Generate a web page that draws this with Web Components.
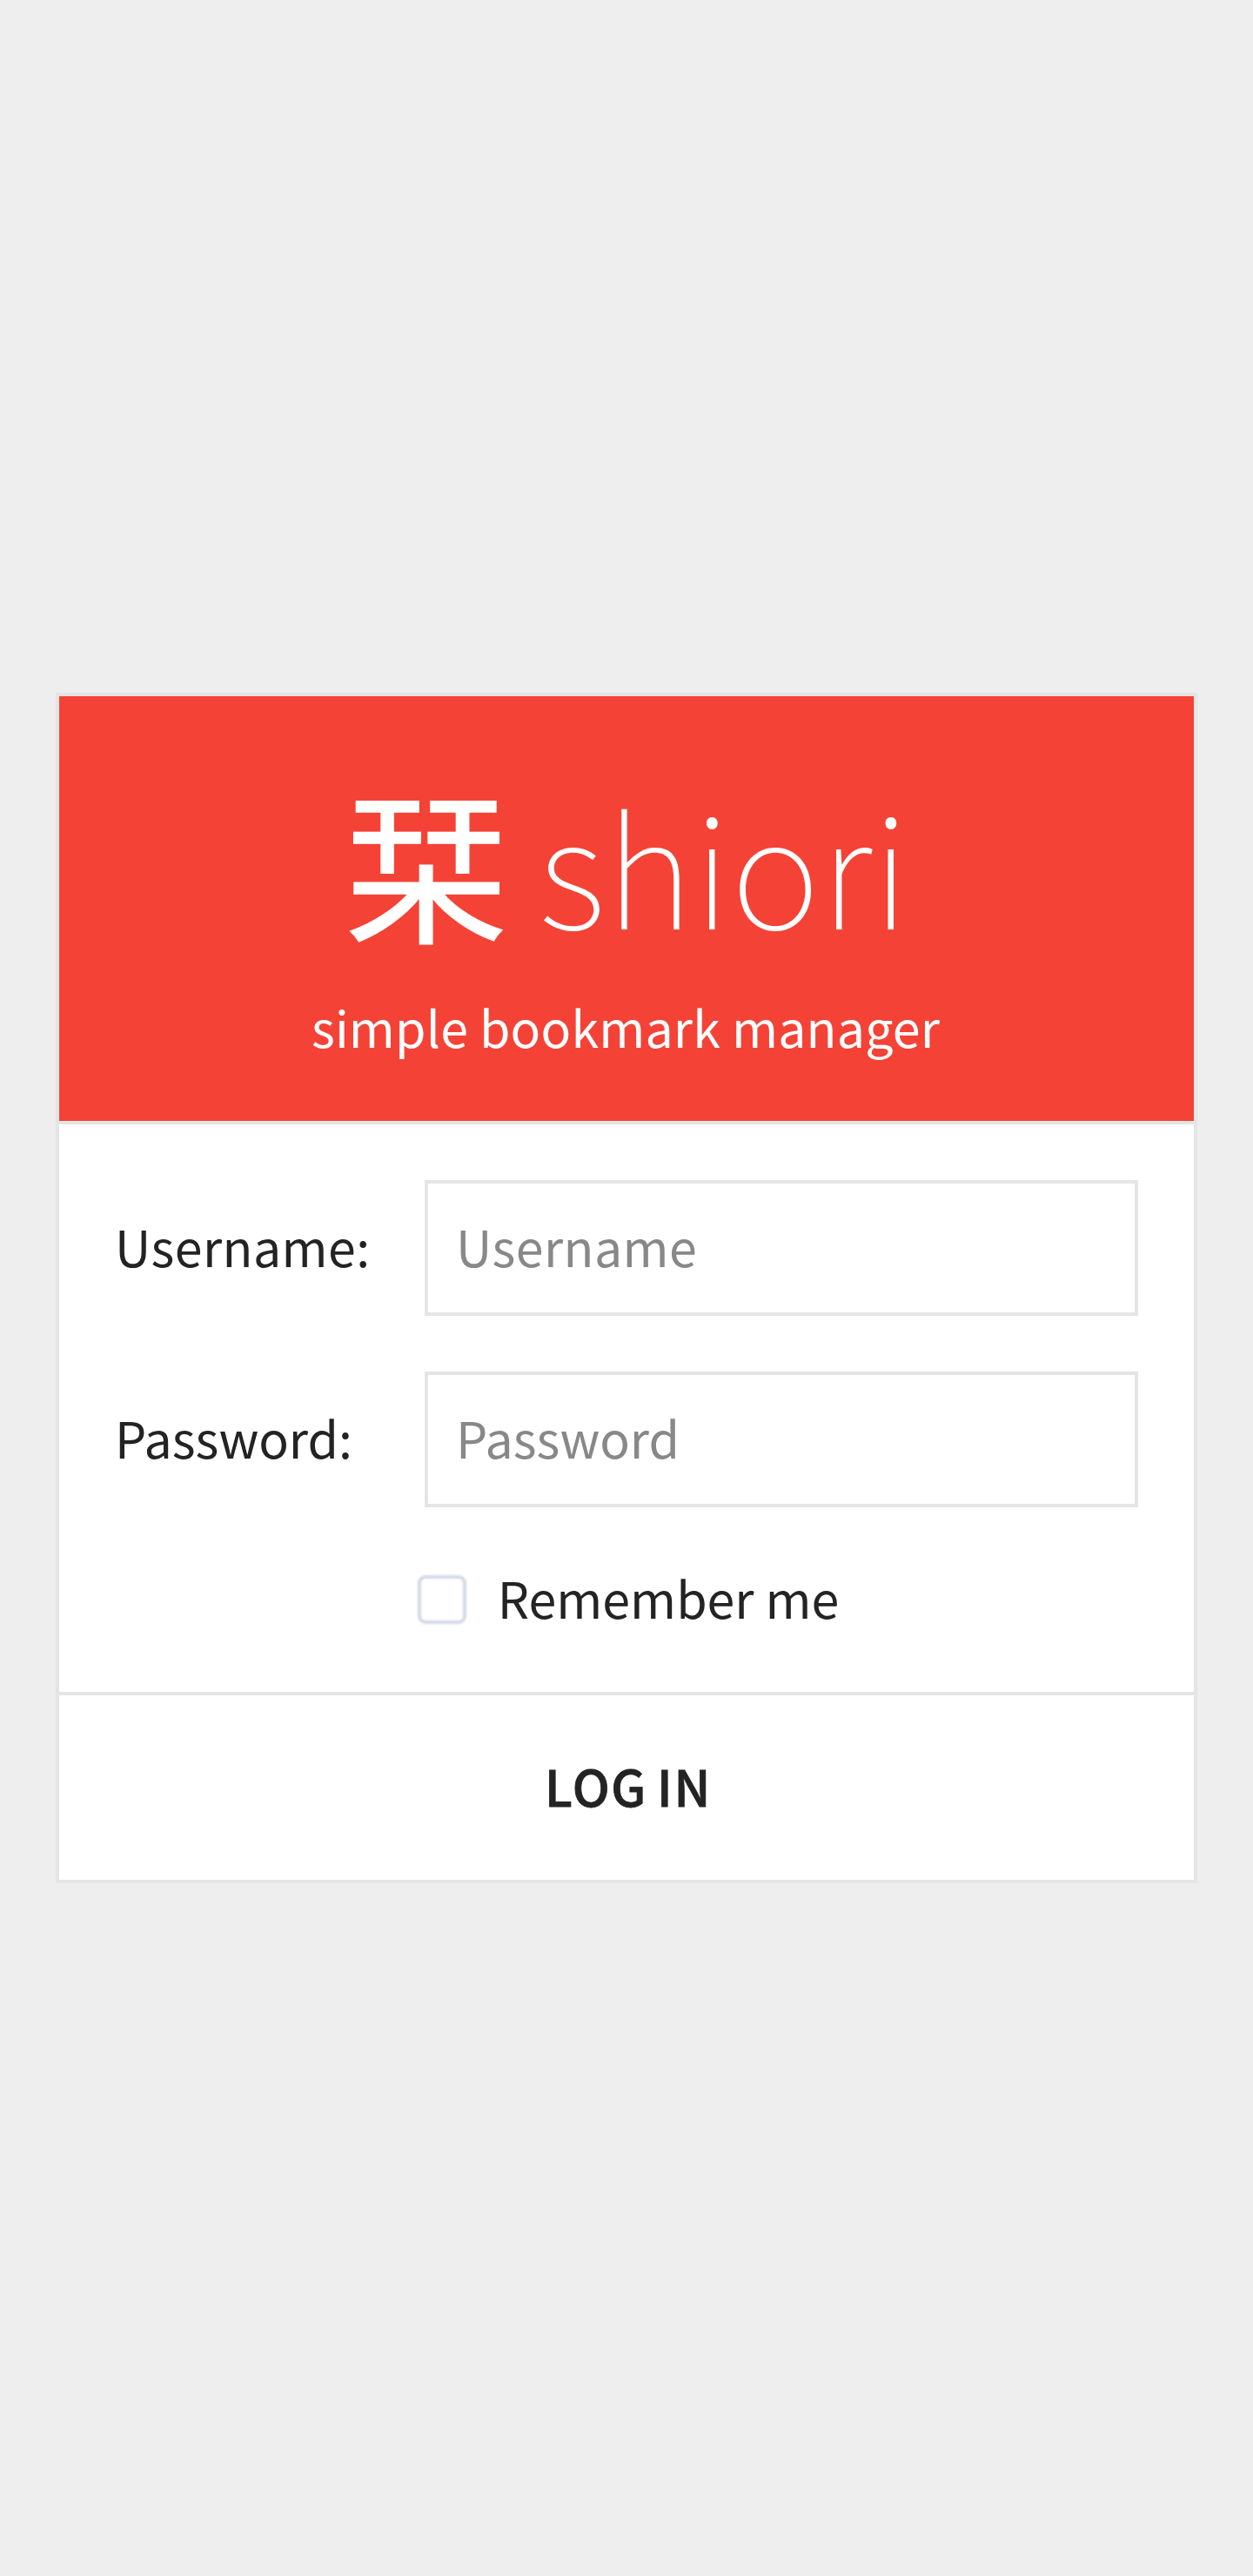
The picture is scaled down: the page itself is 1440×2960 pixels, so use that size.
<!DOCTYPE html>
<html lang="en">
<head>
<meta charset="utf-8">
<title>Shiori - Login</title>
<style>
html, body { margin: 0; height: 100%; }
body { background: #eee; color: #232323; font-family: "Noto Sans CJK JP", sans-serif; font-size: 57.3px; }
</style>
</head>
<body>
<login-page></login-page>
<script>
const define = (name, html) => customElements.define(name, class extends HTMLElement {
  constructor() {
    super();
    this.attachShadow({ mode: 'open' }).innerHTML = html.replace(/\{(\w+)\}/g, (m, k) => this.getAttribute(k) || '');
  }
});

define('brand-header', `
<style>
:host { display: flex; flex-direction: column; align-items: center; box-sizing: border-box; height: 492px; padding-top: 72px; background: #f44336; color: #fff; border-bottom: 4px solid #e5e5e5; white-space: nowrap; }
h1 { margin: 0; padding-left: 2px; height: 240px; display: flex; align-items: flex-start; gap: 35px; font-weight: 100; font-size: 174.7px; line-height: 240px; letter-spacing: .35px; }
.mark { font-size: 187px; font-weight: 400; letter-spacing: 0; margin-top: -3.5px; -webkit-text-stroke: 1.6px #fff; }
p { margin: 19.5px 0 0; padding-right: 2px; line-height: 96px; letter-spacing: .16px; }
</style>
<h1><span class="mark">栞</span><span class="name">shiori</span></h1>
<p><slot></slot></p>`);

define('form-field', `
<style>
:host { display: flex; align-items: center; height: 156px; letter-spacing: var(--tracking, 0); }
label { width: 356px; flex: none; line-height: 96px; padding-bottom: 5px; }
input { flex: 1; min-width: 0; height: 156px; box-sizing: border-box; border: 4px solid #e5e5e5; border-radius: 0; padding: 0 32px 5px; margin: 0; background: #fff; color: #232323; font: inherit; letter-spacing: inherit; outline: none; }
input::placeholder { color: #888; opacity: 1; }
</style>
<label for="f">{label}:</label><input id="f" type="{type}" placeholder="{label}">`);

define('remember-check', `
<style>
:host { display: flex; justify-content: center; height: 84px; }
label { display: flex; align-items: center; gap: 36px; line-height: 84px; padding-left: 4px; }
span { padding-bottom: 5px; }
input { appearance: none; margin: 0; width: 56px; height: 56px; box-sizing: border-box; border: 4px solid #d3d9ea; border-radius: 9px; background: #fff; filter: blur(.9px); }
</style>
<label><input type="checkbox"><span><slot></slot></span></label>`);

define('login-button', `
<style>
:host { display: block; height: 216px; box-sizing: border-box; border-top: 4px solid #e5e5e5; }
button { display: block; width: 100%; height: 212px; border: 0; padding: 0 0 7px 4px; background: #fff; color: inherit; font: inherit; font-size: 57px; font-weight: 500; letter-spacing: 1.7px; word-spacing: -3.4px; -webkit-text-stroke: .8px; }
</style>
<button type="button"><slot></slot></button>`);

define('login-page', `
<style>
:host { display: flex; align-items: center; justify-content: center; height: 100vh; }
main { width: 1304px; border: 4px solid #e5e5e5; background: #fff; }
.fields { display: flex; flex-direction: column; gap: 64px; padding: 64px; }
form-field[type=text] { --tracking: .42px; }
</style>
<main>
<brand-header>simple bookmark manager</brand-header>
<div class="fields">
<form-field label="Username" type="text"></form-field>
<form-field label="Password" type="password"></form-field>
<remember-check>Remember me</remember-check>
</div>
<login-button>LOG IN</login-button>
</main>`);
</script>
</body>
</html>
